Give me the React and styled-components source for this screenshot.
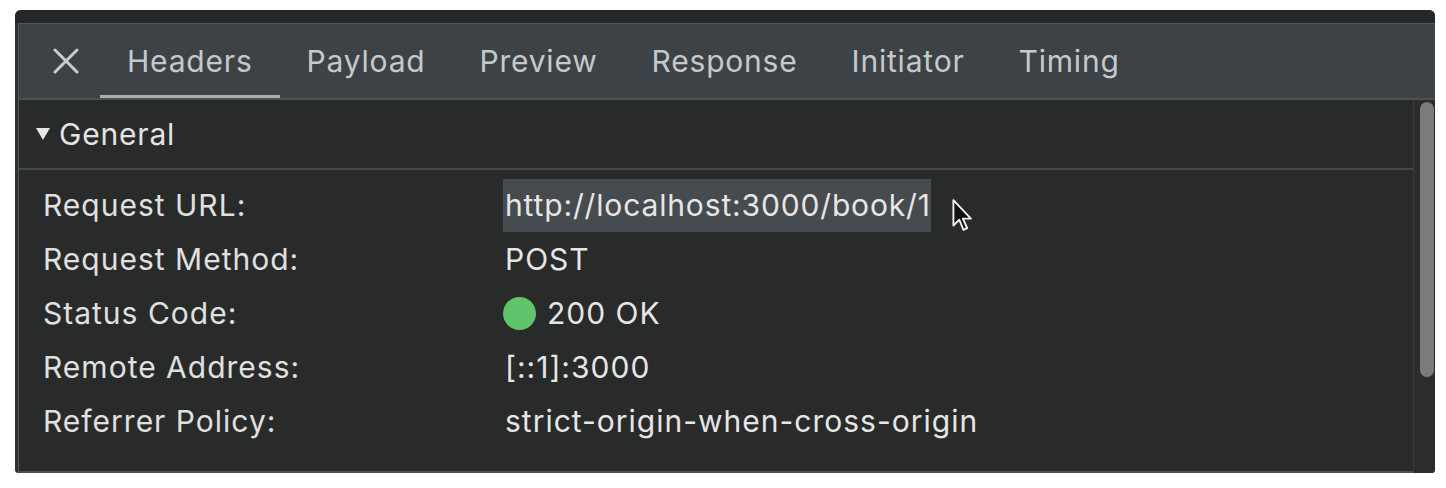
import React from "react";
import styled, { createGlobalStyle } from "styled-components";

const tabs = ["Headers", "Payload", "Preview", "Response", "Initiator", "Timing"];

const App = () => {
  return (
    <>
      <GlobalStyle />
      <Panel>
        <TopStrip />
        <Frame>
          <TabBar>
            <CloseButton aria-label="close">
              <svg width="26" height="26" viewBox="0 0 26 26">
                <path
                  d="M2 2 L24 24 M24 2 L2 24"
                  stroke="#c9cccf"
                  strokeWidth="3"
                  strokeLinecap="round"
                />
              </svg>
            </CloseButton>
            {tabs.map((t, i) => (
              <Tab key={t} $active={i === 0}>
                {t}
              </Tab>
            ))}
          </TabBar>
          <Body>
            <Content>
              <SectionHeader>
                <Triangle />
                General
              </SectionHeader>
              <Rows>
                <Label>Request URL:</Label>
                <Value>
                  <Selected>http://localhost:3000/book/1</Selected>
                  <Cursor width="26" height="36" viewBox="0 0 24 34">
                    <path
                      d="M2 2 L2 26 L7.5 20.5 L11.5 30 L15 28.5 L11 19.5 L18.5 19.5 Z"
                      fill="#111"
                      stroke="#f2f2f2"
                      strokeWidth="1.8"
                      strokeLinejoin="round"
                    />
                  </Cursor>
                </Value>
                <Label>Request Method:</Label>
                <Value>POST</Value>
                <Label>Status Code:</Label>
                <Value>
                  <Dot />
                  200 OK
                </Value>
                <Label>Remote Address:</Label>
                <Value>[::1]:3000</Value>
                <Label>Referrer Policy:</Label>
                <Value>strict-origin-when-cross-origin</Value>
              </Rows>
            </Content>
            <ScrollTrack>
              <Thumb />
            </ScrollTrack>
          </Body>
        </Frame>
      </Panel>
    </>
  );
};

export default App;

const GlobalStyle = createGlobalStyle`
  body {
    margin: 0;
    background: #fff;
    font-family: Inter, "Liberation Sans", sans-serif;
  }
`;

const Panel = styled.div`
  margin: 10px 0 0 15px;
  width: 1420px;
  height: 463px;
  display: flex;
  flex-direction: column;
  background: #262728;
  border-radius: 6px 6px 4px 4px;
  overflow: hidden;
`;

const TopStrip = styled.div`
  height: 13px;
  background: #262728;
`;

const Frame = styled.div`
  flex: 1;
  display: flex;
  flex-direction: column;
  padding-left: 3px;
  background: #2e3234;
  min-height: 0;
  & > * {
    border-left: 1px solid #53585c;
  }
`;

const TabBar = styled.div`
  height: 74px;
  display: flex;
  align-items: stretch;
  background: #3c4246;
  border-top: 1px solid #53585c;
  border-bottom: 2px solid #4c5155;
`;

const CloseButton = styled.div`
  display: flex;
  align-items: center;
  padding: 0 21px 0 34px;
`;

const Tab = styled.div`
  display: flex;
  align-items: center;
  padding: 3px 27px 0 27px;
  border-bottom: 3px solid ${(p) => (p.$active ? "#a9aeb2" : "transparent")};
  color: #c6c9cb;
  font-size: 30px;
  letter-spacing: 0.8px;
`;

const Body = styled.div`
  flex: 1;
  display: flex;
  min-height: 0;
`;

const Content = styled.div`
  flex: 1;
  display: flex;
  flex-direction: column;
  background: #292a2a;
  border-bottom: 2px solid #4e5052;
`;

const SectionHeader = styled.div`
  height: 68px;
  display: flex;
  align-items: center;
  gap: 9px;
  padding-left: 17px;
  border-bottom: 2px solid #45484a;
  color: #e4e4e4;
  font-size: 30px;
  letter-spacing: 0.8px;
`;

const Triangle = styled.span`
  width: 0;
  height: 0;
  border-left: 7px solid transparent;
  border-right: 7px solid transparent;
  border-top: 12px solid #e6e6e6;
`;

const Rows = styled.div`
  display: grid;
  grid-template-columns: 462px 1fr;
  grid-auto-rows: 54px;
  padding: 8px 0 0 24px;
  font-size: 30px;
  letter-spacing: 1px;
  color: #e3e3e3;
`;

const Label = styled.div`
  display: flex;
  align-items: center;
  color: #e0e0e0;
`;

const Value = styled.div`
  position: relative;
  display: flex;
  align-items: center;
  color: #e6e6e6;
`;

const Selected = styled.span`
  margin-left: -2px;
  padding-left: 2px;
  line-height: 53px;
  letter-spacing: 0.85px;
  background: #464b4f;
`;

const Cursor = styled.svg`
  position: absolute;
  left: 446px;
  top: 20px;
`;

const Dot = styled.span`
  width: 33px;
  height: 33px;
  margin: 0 11px 0 -2px;
  border-radius: 50%;
  background: #5fc46b;
`;

const ScrollTrack = styled.div`
  box-sizing: border-box;
  width: 22px;
  background: #2c2c2c;
  border-left: 1px solid #3b3b3b !important;
  padding: 2px 1px 0 6px;
`;

const Thumb = styled.div`
  height: 275px;
  border-radius: 7px;
  background: #7b7b7b;
`;
